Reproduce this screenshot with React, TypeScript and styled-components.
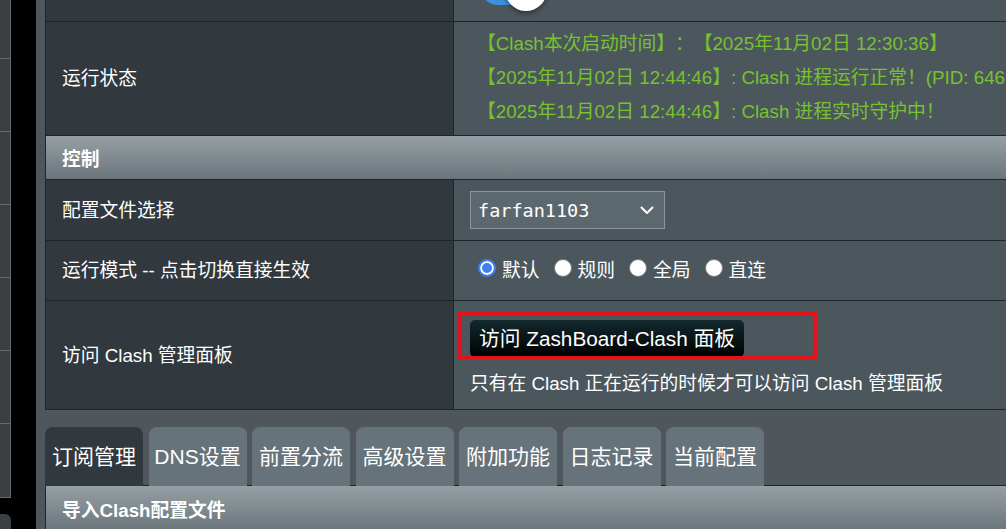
import styled, { createGlobalStyle } from 'styled-components'

const GlobalStyle = createGlobalStyle`
  *, *::before, *::after { box-sizing: border-box; }
  html, body { margin: 0; padding: 0; background: #000; }
  body {
    font-family: "Liberation Sans", "Noto Sans CJK SC", sans-serif;
    color: #fff;
    text-spacing-trim: space-all;
  }
`

const NAV_ITEMS = [59, 73, 73, 73, 73, 73, 74]

const STATUS_LINES = [
  '【Clash本次启动时间】：【2025年11月02日 12:30:36】',
  '【2025年11月02日 12:44:46】: Clash 进程运行正常！(PID: 6469)',
  '【2025年11月02日 12:44:46】: Clash 进程实时守护中！',
]

const MODES = ['默认', '规则', '全局', '直连']

const TABS = ['订阅管理', 'DNS设置', '前置分流', '高级设置', '附加功能', '日志记录', '当前配置']

export default function App() {
  return (
    <>
      <GlobalStyle />
      <Page>
        <SideNav>
          <NavColumn>
            {NAV_ITEMS.map((h, i) => (
              <NavItem key={i} $h={h} />
            ))}
          </NavColumn>
          <NavFooter />
        </SideNav>

        <Main>
          <FormTable>
            <Row $h={22}>
              <LabelCell />
              <ValueCell $clip>
                <Switch>
                  <SwitchTrack />
                  <SwitchKnob />
                </Switch>
              </ValueCell>
            </Row>

            <Row $h={114}>
              <LabelCell>运行状态</LabelCell>
              <StatusCell>
                {STATUS_LINES.map((l) => (
                  <StatusLine key={l}>{l}</StatusLine>
                ))}
              </StatusCell>
            </Row>

            <SectionHeader $bordered>控制</SectionHeader>

            <Row $h={61}>
              <LabelCell>配置文件选择</LabelCell>
              <ValueCell>
                <Select>
                  <span>farfan1103</span>
                  <svg width="14" height="9" viewBox="0 0 14 9" fill="none">
                    <path d="M1.5 1.5 7 7l5.5-5.5" stroke="#fff" strokeWidth="2" strokeLinecap="round" strokeLinejoin="round" />
                  </svg>
                </Select>
              </ValueCell>
            </Row>

            <Row $h={60}>
              <LabelCell>运行模式 -- 点击切换直接生效</LabelCell>
              <ValueCell>
                <RadioGroup>
                  {MODES.map((m, i) => (
                    <RadioLabel key={m}>
                      <Radio type="radio" name="mode" defaultChecked={i === 0} />
                      {m}
                    </RadioLabel>
                  ))}
                </RadioGroup>
              </ValueCell>
            </Row>

            <Row $h={108}>
              <LabelCell>访问 Clash 管理面板</LabelCell>
              <PanelCell>
                <DarkButton>访问 ZashBoard-Clash 面板</DarkButton>
                <Hint>只有在 Clash 正在运行的时候才可以访问 Clash 管理面板</Hint>
                <Highlight />
              </PanelCell>
            </Row>
          </FormTable>

          <TabBar>
            {TABS.map((t, i) => (
              <Tab key={t} $active={i === 0}>
                {t}
              </Tab>
            ))}
          </TabBar>

          <SectionHeader>导入Clash配置文件</SectionHeader>
        </Main>
      </Page>
    </>
  )
}

const Page = styled.div`
  display: flex;
  width: 1006px;
  height: 529px;
  overflow: hidden;
  background: #000;
`

const SideNav = styled.div`
  width: 36px;
  flex-shrink: 0;
  display: flex;
  flex-direction: column;
  background: #000;
`

const NavColumn = styled.div`
  width: 11px;
  display: flex;
  flex-direction: column;
`

const NavItem = styled.div<{ $h: number }>`
  height: ${({ $h }) => $h}px;
  background: #3b3f41;
  border-right: 1px solid #65696b;
  border-bottom: 1px solid #65696b;
`

const NavFooter = styled.div`
  margin-top: 16px;
  width: 11px;
  flex: 1;
  background: #3b3f41;
  border-top-right-radius: 6px;
`

const Main = styled.div`
  flex: 1;
  min-width: 0;
  display: flex;
  flex-direction: column;
  padding-left: 9px;
  background: #4f575d;
`

const FormTable = styled.div`
  display: flex;
  flex-direction: column;
  border-left: 1px solid #1f2428;
  border-bottom: 1px solid #1f2428;
`

const Row = styled.div<{ $h: number }>`
  display: grid;
  grid-template-columns: 408px 1fr;
  height: ${({ $h }) => $h}px;
  border-bottom: 1px solid #1f2428;

  &:last-child {
    border-bottom: none;
  }
`

const LabelCell = styled.div`
  display: flex;
  align-items: center;
  padding: 2px 0 0 16px;
  background: #31383e;
  border-right: 1px solid #1f2428;
  font-size: 18.75px;
  line-height: 1.2;
  color: #fff;
`

const ValueCell = styled.div<{ $clip?: boolean }>`
  display: flex;
  padding-left: ${({ $clip }) => ($clip ? '26px' : '16px')};
  background: #4b575d;
  overflow: ${({ $clip }) => ($clip ? 'hidden' : 'visible')};
  align-items: ${({ $clip }) => ($clip ? 'flex-start' : 'center')};
`

const Switch = styled.div`
  position: relative;
  width: 70px;
  height: 42px;
  margin-top: -31px;
  flex-shrink: 0;
`

const SwitchTrack = styled.div`
  position: absolute;
  left: 0;
  top: 0;
  width: 60px;
  height: 36px;
  border-radius: 18px;
  background: #3e8fe0;
`

const SwitchKnob = styled.div`
  position: absolute;
  left: 25px;
  top: 0;
  width: 42px;
  height: 42px;
  border-radius: 50%;
  background: #fff;
  box-shadow: 0 2px 5px rgba(0, 0, 0, 0.45);
`

const StatusCell = styled.div`
  display: flex;
  flex-direction: column;
  padding: 5px 0 0 23px;
  background: #4b575d;
  overflow: hidden;
`

const StatusLine = styled.div`
  font-size: 18.75px;
  line-height: 34px;
  color: #78c130;
  white-space: nowrap;
`

const SectionHeader = styled.div<{ $bordered?: boolean }>`
  height: 44px;
  flex-shrink: 0;
  display: flex;
  align-items: center;
  padding-left: 16px;
  background: linear-gradient(#959fa4, #6b767c);
  border-bottom: ${({ $bordered }) => ($bordered ? '1px solid #1f2428' : 'none')};
  border-left: ${({ $bordered }) => ($bordered ? 'none' : '1px solid #1f2428')};
  font-size: 18.75px;
  font-weight: 700;
  color: #fff;
`

const Select = styled.div`
  width: 195px;
  height: 38px;
  display: flex;
  align-items: center;
  justify-content: space-between;
  padding: 0 10px 0 7px;
  background: #5b696f;
  border: 1px solid #8b9599;
  font-family: "DejaVu Sans Mono", "Liberation Mono", monospace;
  font-size: 18.5px;
  color: #fff;
`

const RadioGroup = styled.div`
  display: flex;
  align-items: center;
  gap: 14px;
  padding-left: 8px;
  margin-top: 2px;
`

const RadioLabel = styled.label`
  display: flex;
  align-items: center;
  gap: 6px;
  font-size: 18.75px;
  line-height: 1.2;
  color: #fff;
`

const Radio = styled.input`
  appearance: none;
  margin: 0;
  width: 18px;
  height: 18px;
  border-radius: 50%;
  background: #fff;
  border: 1px solid #7a7a7a;
  position: relative;
  top: -4px;

  &:checked {
    border: 2px solid #3f7ef5;
    box-shadow: inset 0 0 0 2px #fff;
    background: #3f7ef5;
  }
`

const PanelCell = styled.div`
  position: relative;
  display: flex;
  flex-direction: column;
  align-items: flex-start;
  gap: 16px;
  padding: 19px 0 0 16px;
  background: #4b575d;
`

const DarkButton = styled.button`
  height: 37px;
  padding: 0 9px;
  border: none;
  border-radius: 5px;
  background: linear-gradient(#13292e, #000);
  font-family: "Liberation Sans", "Noto Sans CJK SC", sans-serif;
  font-size: 20.75px;
  line-height: 37px;
  color: #fff;
`

const Hint = styled.div`
  font-size: 18.75px;
  line-height: 22px;
  color: #fff;
  white-space: nowrap;
`

const Highlight = styled.div`
  position: absolute;
  left: 4px;
  top: 11px;
  width: 359px;
  height: 47px;
  border: 3px solid #e3131c;
  pointer-events: none;
`

const TabBar = styled.div`
  display: flex;
  align-items: flex-end;
  gap: 5.5px;
  margin-top: 17px;
  height: 59px;
  border-bottom: 1px solid #1f2326;
`

const Tab = styled.div<{ $active: boolean }>`
  width: 98px;
  height: 59px;
  margin-bottom: -1px;
  display: flex;
  align-items: center;
  justify-content: center;
  border-radius: 8px 8px 0 0;
  background: ${({ $active }) => ($active ? '#31383e' : '#67737a')};
  font-size: 21px;
  line-height: 1.2;
  color: #fff;
  white-space: nowrap;
`
